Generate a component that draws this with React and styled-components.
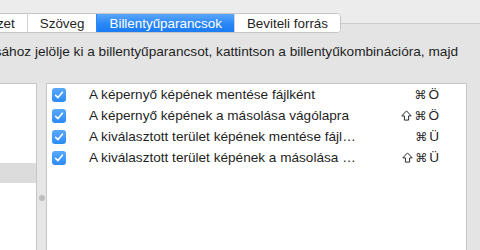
import React from 'react';
import styled, { createGlobalStyle } from 'styled-components';

const GlobalStyle = createGlobalStyle`
    html, body {
        margin: 0;
        padding: 0;
        background: #e4e4e4;
    }
    body {
        font-family: "Liberation Sans", Arial, sans-serif;
        font-size: 13px;
        color: #1f1f1f;
    }
`;

const tabs = ['Billentyűzet', 'Szöveg', 'Billentyűparancsok', 'Beviteli forrás'];
const activeTab = 2;

const shortcuts = [
    { label: 'A képernyő képének mentése fájlként', shift: false, key: 'Ö' },
    { label: 'A képernyő képének a másolása vágólapra', shift: true, key: 'Ö' },
    { label: 'A kiválasztott terület képének mentése fájlként', shift: false, key: 'Ü' },
    { label: 'A kiválasztott terület képének a másolása vágólapra', shift: true, key: 'Ü' },
];

const categories = 9;
const selectedCategory = 4;

function Check() {
    return (
        <CheckBox>
            <svg width="10" height="10" viewBox="0 0 10 10">
                <path d="M1.6 5.3 L4 7.6 L8.4 2.2" fill="none" stroke="#fff" strokeWidth="1.6" strokeLinecap="round" strokeLinejoin="round" />
            </svg>
        </CheckBox>
    );
}

function ShiftIcon() {
    return (
        <svg width="11" height="11" viewBox="0 0 11 11">
            <path d="M5.5 0.9 L10.2 5.9 H7.6 V10.1 H3.4 V5.9 H0.8 Z" fill="none" stroke="#2a2a2a" strokeWidth="1" strokeLinejoin="round" />
        </svg>
    );
}

export default function App() {
    return (
        <Window>
            <GlobalStyle />
            <TabRow>
                <TabClip>
                    <Segmented>
                        {tabs.map((t, i) => (
                            <Tab key={t} $active={i === activeTab}>
                                {t}
                            </Tab>
                        ))}
                    </Segmented>
                </TabClip>
            </TabRow>
            <Hint>
                <span>
                    A billentyűparancs módosításához jelölje ki a billentyűparancsot, kattintson a
                    billentyűkombinációra, majd
                </span>
            </Hint>
            <Panels>
                <CategoryList>
                    {Array.from({ length: categories }).map((_, i) => (
                        <CategoryRow key={i} $selected={i === selectedCategory} />
                    ))}
                </CategoryList>
                <Splitter>
                    <Grip />
                </Splitter>
                <ShortcutList>
                    {shortcuts.map((s) => (
                        <ShortcutRow key={s.label}>
                            <Check />
                            <Label>{s.label}</Label>
                            <Keys>
                                {s.shift && <ShiftIcon />}
                                <Cmd>⌘</Cmd>
                                <span>{s.key}</span>
                            </Keys>
                        </ShortcutRow>
                    ))}
                </ShortcutList>
            </Panels>
        </Window>
    );
}

const Window = styled.div`
    width: 480px;
    height: 250px;
    overflow: hidden;
    display: flex;
    flex-direction: column;
    background: #e4e4e4;
`;

const TabRow = styled.div`
    flex-shrink: 0;
    height: 33px;
    padding-top: 13px;
    box-sizing: border-box;
    background: linear-gradient(
        180deg,
        #ececec 0,
        #ececec 23px,
        #cccccc 23px,
        #cccccc 24px,
        #e4e4e4 24px
    );
`;

const TabClip = styled.div`
    width: 341px;
    height: 20px;
    display: flex;
    justify-content: flex-end;
    overflow: hidden;
`;

const Segmented = styled.div`
    display: flex;
    flex-shrink: 0;
    height: 20px;
    box-sizing: border-box;
    background: #fff;
    border: 1px solid #c6c6c6;
    border-radius: 4px;
    overflow: hidden;
`;

const Tab = styled.div`
    display: flex;
    align-items: center;
    padding: 0 12px;
    font-size: 13.4px;
    white-space: nowrap;
    color: ${(p) => (p.$active ? '#fff' : '#1f1f1f')};
    background: ${(p) => (p.$active ? 'linear-gradient(180deg, #5aa7fb 0%, #2a87f7 55%, #1b7cf4 100%)' : '#fff')};
    border-left: 1px solid ${(p) => (p.$active ? '#2a87f7' : '#d4d4d4')};

    &:first-child {
        border-left: none;
    }
`;

const Hint = styled.div`
    flex-shrink: 0;
    margin-top: 11px;
    height: 16px;
    line-height: 16px;
    padding-right: 22px;
    display: flex;
    justify-content: flex-end;
    overflow: hidden;
    white-space: nowrap;
    font-size: 13.65px;

    span {
        flex-shrink: 0;
    }
`;

const Panels = styled.div`
    flex: 1;
    min-height: 0;
    display: flex;
    margin-top: 23px;
    padding-right: 13px;
`;

const CategoryList = styled.div`
    width: 37px;
    box-sizing: border-box;
    background: #fff;
    border-top: 1px solid #c6c6c6;
    border-right: 1px solid #c6c6c6;
    overflow: hidden;
`;

const CategoryRow = styled.div`
    height: 20px;
    margin-top: ${(p) => (p.$selected ? '-1px' : '0')};
    margin-bottom: ${(p) => (p.$selected ? '1px' : '0')};
    background: ${(p) => (p.$selected ? '#dcdcdc' : 'transparent')};
`;

const Splitter = styled.div`
    width: 9px;
    background: #e6e6e6;
    display: flex;
    justify-content: center;
    align-items: flex-start;
    padding-top: 112px;
`;

const Grip = styled.div`
    width: 6px;
    height: 6px;
    border-radius: 50%;
    background: #bdbdbd;
`;

const ShortcutList = styled.div`
    flex: 1;
    background: #fff;
    border: 1px solid #c6c6c6;
    border-bottom: none;
`;

const ShortcutRow = styled.div`
    height: 21px;
    display: flex;
    align-items: center;
    padding-left: 5px;
    padding-right: 27px;
    font-size: 13.6px;
`;

const CheckBox = styled.div`
    width: 14px;
    height: 14px;
    flex-shrink: 0;
    border-radius: 3px;
    background: linear-gradient(180deg, #5aa8fc 0%, #2c8bf8 100%);
    display: flex;
    align-items: center;
    justify-content: center;
`;

const Label = styled.div`
    width: 268px;
    margin-left: 23px;
    white-space: nowrap;
    overflow: hidden;
    text-overflow: ellipsis;
`;

const Keys = styled.div`
    flex: 1;
    display: flex;
    justify-content: flex-end;
    align-items: center;
    gap: 1px;
    white-space: nowrap;
`;

const Cmd = styled.span`
    font-family: "DejaVu Sans", sans-serif;
    font-size: 12px;
    margin: 0 1px;
`;
